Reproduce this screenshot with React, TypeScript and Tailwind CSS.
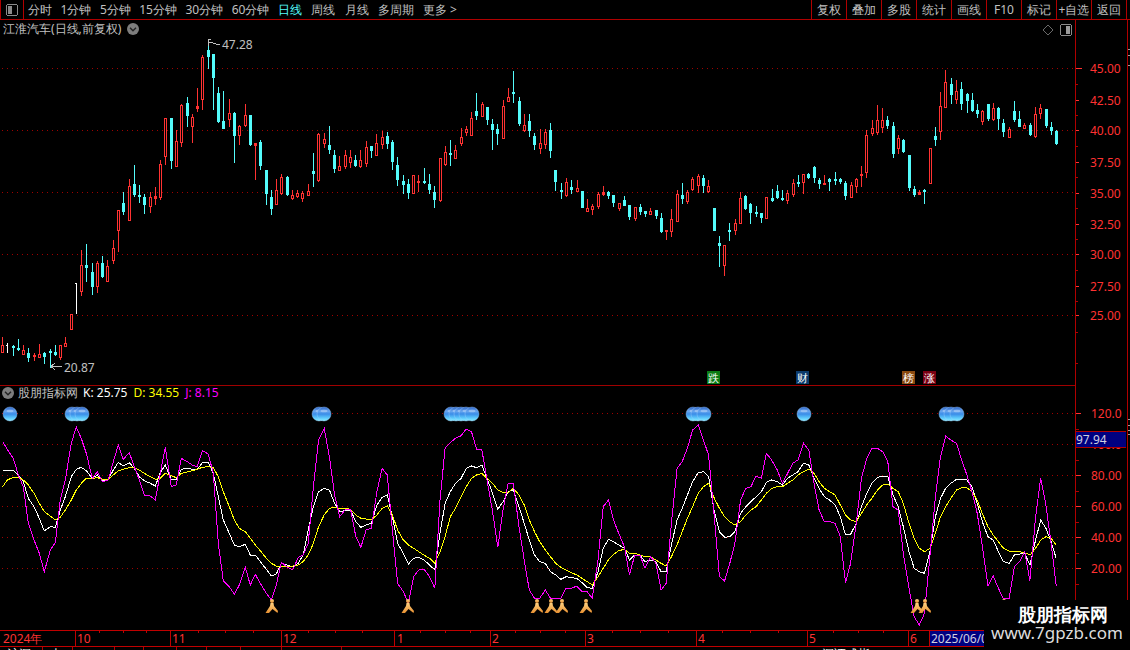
import React from "react";

const RED = "#ff3232";
const CY = "#54fcfc";

// type (0 red, 1 cyan, 2 white), high, bodyTop, bodyBottom, low
const C: number[][] = [
[0,337,345,352,352],[2,343,345,346,352],[1,345,346,347,355],[1,339,348,349,350],[0,345,350,354,354],[1,348,353,357,361],[0,353,355,356,360],[0,344,354,357,357],[1,352,353,356,363],[1,349,351,352,367],
[1,345,352,354,355],[0,345,345,357,359],[0,337,343,346,346],[0,314,314,329,329],[2,283,283,284,313],[0,250,265,291,295],[1,244,265,267,281],[1,263,272,286,294],[0,261,263,286,292],[1,256,263,276,277],
[0,260,266,281,281],[0,240,248,260,263],[0,210,210,230,251],[1,192,203,211,214],[0,179,186,220,220],[1,165,184,194,196],[1,185,195,196,202],[1,194,197,204,213],[0,192,197,206,212],[0,187,196,198,204],
[0,160,164,197,199],[0,118,118,156,164],[1,118,118,160,168],[0,130,141,166,166],[0,104,105,142,146],[1,97,103,115,126],[0,114,117,126,142],[0,88,106,108,111],[0,55,57,99,109],[1,40,50,56,68],
[1,54,54,77,109],[1,87,93,121,122],[1,91,121,128,128],[0,99,113,119,126],[1,112,113,135,162],[0,125,126,135,144],[0,104,115,125,126],[1,115,115,144,145],[0,143,143,145,179],[1,140,142,165,169],
[1,170,170,193,204],[1,190,197,208,214],[0,179,190,204,204],[0,174,177,193,194],[1,176,177,194,195],[0,190,195,198,199],[0,190,193,196,197],[0,191,193,198,201],[0,184,191,195,195],[1,153,171,173,186],
[0,133,134,180,181],[0,133,139,143,147],[1,126,145,149,153],[1,150,155,168,172],[0,156,166,170,170],[0,150,155,166,168],[0,150,157,162,167],[1,155,160,165,166],[0,150,160,166,167],[0,141,147,163,166],
[1,146,146,150,157],[0,134,143,155,155],[0,131,137,144,148],[1,132,136,143,148],[1,140,142,161,169],[1,157,165,179,185],[1,175,181,184,193],[1,179,184,192,198],[0,175,175,193,193],[0,175,181,182,191],
[1,168,181,182,183],[1,174,184,189,193],[1,186,192,199,207],[0,158,158,200,201],[0,146,152,164,165],[1,140,153,154,165],[0,145,150,158,158],[0,128,137,143,145],[0,126,129,132,135],[0,112,118,135,135],
[1,93,111,115,119],[0,102,104,116,116],[1,107,107,119,124],[1,119,124,129,149],[1,124,129,133,144],[0,100,106,138,138],[0,88,97,101,101],[1,71,92,93,102],[1,97,101,123,125],[0,114,125,130,131],
[1,114,121,130,136],[1,133,136,144,149],[0,129,143,148,153],[0,129,132,144,148],[1,123,130,150,157],[1,170,170,181,190],[1,183,190,191,198],[0,178,182,195,196],[1,180,187,189,193],[0,180,188,191,191],
[1,191,191,207,207],[0,199,208,211,211],[0,204,206,209,214],[0,192,194,206,208],[0,186,192,194,195],[1,191,192,195,198],[1,195,195,202,206],[0,203,203,208,210],[1,196,200,205,205],[1,205,205,216,219],
[0,207,207,218,220],[1,204,207,211,214],[1,211,211,213,216],[0,208,211,214,214],[1,210,210,215,218],[1,213,218,231,232],[0,230,230,231,239],[0,209,219,231,236],[0,190,194,221,221],[1,183,195,198,203],
[0,190,192,201,203],[0,177,179,189,190],[0,174,176,185,192],[1,175,178,185,192],[0,180,186,191,192],[1,208,208,230,230],[1,236,243,245,266],[0,245,245,265,275],[1,223,230,231,240],[0,219,223,230,234],
[0,192,198,223,223],[1,195,196,208,209],[1,203,204,212,223],[1,206,212,213,216],[1,213,213,217,222],[0,197,197,218,218],[1,189,198,200,201],[1,185,191,197,198],[1,190,198,199,200],[0,190,193,200,203],
[0,179,183,194,196],[1,175,182,183,186],[0,174,174,182,193],[1,173,174,177,178],[1,166,167,177,182],[1,178,180,183,188],[0,175,183,184,184],[1,178,179,181,190],[1,172,179,180,184],[1,178,179,181,183],
[1,181,183,195,199],[0,182,185,197,197],[0,178,179,186,192],[0,166,174,175,186],[0,130,135,172,177],[0,120,128,133,135],[0,105,120,132,134],[0,108,120,127,132],[1,116,120,125,128],[1,122,126,153,157],
[0,135,138,148,153],[1,139,140,151,152],[1,155,155,187,190],[1,186,189,194,196],[0,190,192,194,194],[1,189,190,191,203],[0,148,148,183,183],[1,127,136,139,145],[0,92,106,131,139],[0,70,82,107,107],
[1,78,84,94,103],[0,80,91,99,103],[1,82,89,103,109],[1,93,94,100,112],[1,93,100,110,111],[1,104,110,113,117],[0,110,111,121,124],[1,104,104,118,120],[0,103,108,119,120],[1,107,108,118,129],
[1,119,123,131,136],[0,127,129,137,137],[1,101,111,119,121],[1,111,119,126,126],[0,123,125,128,128],[1,123,125,134,135],[0,107,114,136,137],[0,104,108,113,118],[1,109,109,125,127],[1,122,127,130,134],[1,130,131,143,144],
];

const J1 = [8,35,22,58,40,85,55,135,70,170,85,280,102,330,118,370,133,425,151,360,166,338,181,210,196,150,214,40,229,-9,244,25,259,70,277,145,292,125,307,155,325,150,340,95,355,45,370,88,388,68,403,110,418,150,433,195,451,198,466,210,481,130,496,52,514,170,529,165,544,85,562,95,577,105,592,110,607,62,625,72,640,130,655,340,670,452,688,470,703,493,718,465,736,412,751,465,766,433,781,460,799,490,814,510,829,465,844,397,860,410,878,420,895,382];
const K1 = [8,123,22,121,40,121,55,135,70,155,85,205,102,230,118,265,133,303,151,290,166,292,181,240,196,200,214,140,229,118,244,112,259,122,277,145,292,135,307,152,325,148,340,120,355,97,370,108,388,98,403,115,418,140,433,152,451,160,466,168,481,128,496,105,514,148,529,148,544,118,562,115,577,118,592,118,607,98,625,97,640,130,655,200,670,270,688,310,703,345,718,350,736,343,751,375,766,375,781,395,799,418,814,438,829,432,844,400,860,405,878,410,895,400];
const D1 = [8,170,22,150,40,142,55,142,70,150,85,165,102,190,118,220,133,245,151,258,166,270,181,262,196,240,214,210,229,180,244,160,259,145,277,145,292,143,307,147,325,147,340,135,355,122,370,118,388,113,403,113,418,120,433,130,451,140,466,148,481,145,496,130,514,137,529,143,544,130,562,126,577,122,592,118,607,112,625,110,640,113,655,140,670,185,688,230,703,270,718,295,736,305,751,325,766,345,781,362,799,385,814,400,829,408,844,410,860,408,878,408,895,405];

const J2 = [64,405,74,370,84,200,94,60,105,25,115,110,125,225,135,290,145,270,156,268,166,350,176,382,186,330,196,325,207,215,217,145,227,165,237,330,247,490,258,515,268,550,278,470,288,450,298,447,309,470,319,505,329,240,339,85,349,68,359,55,370,47,380,27,390,35,400,88,410,88,420,180,431,275,441,382,451,270,461,190,471,190,482,320,492,420,502,510,512,535,522,535,533,510,543,535,553,535,563,535,573,505,584,505,594,498,604,515,614,515,624,535,635,420,645,260,655,240,665,300,675,340,686,380,696,465,706,405,716,405,726,445,737,410,747,430,757,510,767,490,777,310,788,145,798,125,808,85,818,30,829,15,839,60,849,105,860,290,870,470,880,483,890,430,900,370,911,240,921,205,931,200,941,168,951,175,961,100,971,120,982,150,992,190,1002,160,1012,130,1022,120,1033,70,1043,90,1053,190,1063,270,1073,305,1083,305,1094,310,1104,350,1114,488,1124,430,1135,310,1145,175,1155,115,1165,85,1176,85,1186,95,1196,125,1206,260,1216,270,1226,400,1237,505,1247,590,1257,615,1267,580,1278,400,1288,230,1298,110,1308,48,1318,60,1329,70,1339,120,1349,165,1359,215,1369,280,1380,390,1390,497,1400,468,1410,505,1420,537,1431,535,1441,440,1451,425,1461,395,1471,482,1482,290,1492,175,1502,255,1512,370,1522,497];
const K2 = [64,405,74,330,84,260,94,215,105,205,115,210,125,250,135,275,145,272,156,270,166,305,176,322,186,315,196,310,207,255,217,232,227,225,237,290,247,370,258,400,268,432,278,415,288,412,298,420,309,435,319,450,329,340,339,250,349,215,359,190,370,175,380,145,390,138,400,143,410,135,420,175,431,220,441,268,451,245,461,215,471,210,482,260,492,310,502,360,512,405,522,425,533,430,543,455,553,465,563,478,573,470,584,473,594,475,604,488,614,503,624,505,635,455,645,385,655,358,665,365,675,375,686,385,696,420,706,405,716,405,726,425,737,420,747,425,757,455,767,455,777,375,788,300,798,265,808,225,818,185,829,158,839,155,849,170,860,275,870,335,880,352,890,350,900,335,911,280,921,260,931,245,941,230,951,215,961,187,971,180,982,185,992,195,1002,175,1012,165,1022,155,1033,130,1043,135,1053,175,1063,205,1073,230,1083,240,1094,255,1104,290,1114,345,1124,343,1135,310,1145,260,1155,220,1165,190,1176,172,1186,168,1196,170,1206,225,1216,260,1226,320,1237,395,1247,445,1257,455,1267,460,1278,390,1288,290,1298,235,1308,205,1318,190,1329,178,1339,178,1349,180,1359,200,1369,250,1380,310,1390,350,1400,360,1410,395,1420,425,1431,430,1441,405,1451,402,1461,400,1471,435,1482,360,1492,300,1502,325,1512,365,1522,415];
const D2 = [64,425,74,405,84,370,94,320,105,285,115,265,125,262,135,265,145,265,156,268,166,285,176,295,186,297,196,300,207,285,217,265,227,258,237,285,247,330,258,360,268,375,278,385,288,395,298,405,309,415,319,430,329,395,339,350,349,290,359,265,370,230,380,200,390,175,400,165,410,160,420,175,431,190,441,210,451,218,461,218,471,205,482,225,492,255,502,300,512,335,522,365,533,390,543,410,553,430,563,442,573,450,584,458,594,465,604,475,614,485,624,495,635,470,645,445,655,420,665,403,675,392,686,388,696,400,706,400,716,405,726,410,737,410,747,420,757,430,767,438,777,410,788,375,798,335,808,295,818,260,829,220,839,200,849,190,860,235,870,265,880,290,890,305,900,315,911,305,921,285,931,270,941,260,951,240,961,220,971,205,982,200,992,200,1002,190,1012,180,1022,165,1033,155,1043,148,1053,160,1063,185,1073,205,1083,215,1094,225,1104,255,1114,285,1124,300,1135,305,1145,280,1155,255,1165,235,1176,210,1186,195,1196,192,1206,205,1216,215,1226,250,1237,310,1247,355,1257,385,1267,395,1278,385,1288,340,1298,290,1308,260,1318,235,1329,210,1339,203,1349,203,1359,215,1369,240,1380,285,1390,320,1400,345,1410,365,1420,385,1431,393,1441,395,1451,395,1461,398,1471,405,1482,385,1492,360,1502,350,1512,355,1522,375];

const pts = (a: number[], ox: number, sx: number, oy: number) => {
  const out: string[] = [];
  for (let i = 0; i < a.length; i += 2) out.push(`${(ox + a[i] / sx).toFixed(1)},${(oy + a[i + 1] / 3).toFixed(1)}`);
  return out.join(" ");
};
const line = (a: number[], b: number[]) => pts(a, 0, 3, 430) + " " + pts(b, 270, 1.9358, 420);

const BALLS = [10, 72, 77, 82, 319, 324, 451, 456, 461, 466, 472, 693, 698, 704, 804, 946, 951, 957];
const PEOPLE = [272, 408, 537, 551, 562, 586, 917, 925, 1004];
const PRICE = [[45, 68], [42.5, 100], [40, 130], [37.5, 162], [35, 193], [32.5, 224], [30, 254], [27.5, 286], [25, 315]];

function Candles() {
  return (
    <g shapeRendering="crispEdges">
      {C.map((c, i) => {
        const x = Math.floor(2.6 + 5.27 * i);
        const col = c[0] === 0 ? RED : c[0] === 1 ? CY : "#ffffff";
        const bh = c[3] - c[2];
        return (
          <g key={i}>
            <rect x={x} y={c[1]} width={1} height={c[4] - c[1] + 1} fill={col} />
            {c[0] === 2 ? (
              <rect x={x - 1} y={c[2]} width={2} height={1} fill={col} />
            ) : (
              <rect x={x - 1} y={c[2]} width={3} height={bh + 1} fill={col} />
            )}
            {c[0] === 0 && bh >= 3 ? <rect x={x} y={c[2] + 1} width={1} height={bh - 1} fill="#000" /> : null}
          </g>
        );
      })}
    </g>
  );
}

function HalfIcon({ side }: { side: "l" | "r" }) {
  return (
    <svg width="12" height="12" viewBox="0 0 12 12" shapeRendering="crispEdges">
      <rect x="0.5" y="0.5" width="11" height="11" rx="2" fill="#000" stroke="#8a8a8a" />
      {side === "l" ? <rect x="2" y="2" width="4" height="8" fill="#8a8a8a" /> : <rect x="6" y="2" width="4" height="8" fill="#9a9a9a" />}
    </svg>
  );
}

function Chevron() {
  return (
    <svg width="12" height="12" viewBox="0 0 12 12">
      <circle cx="6" cy="6" r="6" fill="#7d7d7d" />
      <path d="M3 4.8 L6 7.8 L9 4.8" fill="none" stroke="#222" strokeWidth="1.4" />
    </svg>
  );
}

const Btn = ({ t }: { t: string }) => (
  <div className="w-[35px] h-full flex items-center justify-center border-l border-[#b00000] text-[#c0c0c0]">{t}</div>
);

const TIME: [string, string][] = [
  ["2024年", "w-[75px] pl-[3px]"],
  ["10", "w-[95px] pl-[1px]"],
  ["11", "w-[111px] pl-[1px]"],
  ["12", "w-[113px] pl-[1px]"],
  ["1", "w-[96px] pl-[2px]"],
  ["2", "w-[95px] pl-[1px]"],
  ["3", "w-[111px] pl-[1px]"],
  ["4", "w-[111px] pl-[1px]"],
  ["5", "w-[101px] pl-[1px]"],
  ["6", "w-[21px] pl-[1px]"],
];

const STATUS = ["w-[43px]", "w-[30px]", "w-[42px]", "w-[29px]", "w-[33px]", "w-[30px]", "w-[34px]", "w-[41px]", "w-[60px]"];

export default function App() {
  return (
    <div className="relative w-[1130px] h-[650px] bg-black overflow-hidden flex flex-col text-[12px] font-['Liberation_Sans','Noto_Sans_CJK_SC',sans-serif]">
      {/* top bar */}
      <header className="h-5 shrink-0 flex items-center border-b border-[#b00000] text-[#c0c0c0] leading-none">
        <div className="w-6 h-full flex items-center justify-center border-l border-r border-[#b00000]">
          <HalfIcon side="l" />
        </div>
        <nav className="flex items-center gap-[8.5px] pl-1 pt-px">
          <span>分时</span>
          <span>1分钟</span>
          <span>5分钟</span>
          <span>15分钟</span>
          <span>30分钟</span>
          <span>60分钟</span>
          <span className="text-[#54fcfc]">日线</span>
          <span className="ml-px">周线</span>
          <span className="ml-px">月线</span>
          <span className="ml-px">多周期</span>
          <span>更多 &gt;</span>
        </nav>
        <div className="ml-auto h-full flex items-center border-r border-[#b00000] mr-[3px]">
          {["复权", "叠加", "多股", "统计", "画线", "F10", "标记", "+自选", "返回"].map((t) => (
            <Btn key={t} t={t} />
          ))}
        </div>
      </header>

      <main className="h-[627px] shrink-0 flex">
        {/* left column */}
        <div className="w-[1076px] shrink-0 flex flex-col border-r border-[#b00000]">
          {/* price panel */}
          <section className="relative h-[366px] shrink-0 border-b border-[#a00000]">
            <svg width="1075" height="365" viewBox="0 20 1075 365" className="block">
              {[68, 130, 192, 254, 315].map((y) => (
                <line key={y} x1="2" x2="1075" y1={y + 0.5} y2={y + 0.5} stroke="#a00000" strokeDasharray="1 4" shapeRendering="crispEdges" />
              ))}
              <Candles />
              <path d="M208.5 39V46M208.5 39.5H211M208.5 42.5L212 42.5L216 44L220 44" fill="none" stroke="#c0c0c0" shapeRendering="crispEdges" />
              <text x="222" y="49" fontSize="12" fill="#c0c0c0">47.28</text>
              <path d="M51 366.5H62M51 366.5L55 363M51 366.5L55 370" fill="none" stroke="#c0c0c0" shapeRendering="crispEdges" />
              <text x="64" y="372" fontSize="12" fill="#c0c0c0">20.87</text>
            </svg>
            <div className="absolute left-[3px] top-[3px] flex items-center gap-[6px] text-[#c0c0c0] leading-none">
              <span>江淮汽车(日线,前复权)</span>
              <Chevron />
            </div>
            <div className="absolute right-[3px] top-[4px] flex items-center gap-[7px]">
              <svg width="10" height="10" viewBox="0 0 10 10"><path d="M5 0L10 5L5 10L0 5Z" fill="none" stroke="#6a6a6a" /></svg>
              <HalfIcon side="r" />
            </div>
            <div className="absolute left-[707px] top-[351px] w-[13px] h-[13px] bg-[#0a7a14] text-white text-[11px] leading-[13px] text-center">跌</div>
            <div className="absolute left-[796px] top-[351px] w-[13px] h-[13px] bg-[#0b3a6b] text-white text-[11px] leading-[13px] text-center">财</div>
            <div className="absolute left-[902px] top-[351px] w-[13px] h-[13px] bg-[#8a4a10] text-white text-[11px] leading-[13px] text-center">榜</div>
            <div className="absolute left-[923px] top-[351px] w-[13px] h-[13px] bg-[#7a0012] text-white text-[11px] leading-[13px] text-center">涨</div>
          </section>

          {/* indicator panel */}
          <section className="relative h-[244px] shrink-0">
            <svg width="1075" height="244" viewBox="0 386 1075 244" className="block">
              <defs>
                <linearGradient id="ball" x1="0" y1="0" x2="0" y2="1">
                  <stop offset="0" stopColor="#2a62c8" />
                  <stop offset="0.3" stopColor="#6aa6ee" />
                  <stop offset="0.5" stopColor="#3a8ce8" />
                  <stop offset="0.78" stopColor="#5cc8fb" />
                  <stop offset="1" stopColor="#8eeeff" />
                </linearGradient>
                <linearGradient id="man" x1="0" y1="0" x2="0" y2="1">
                  <stop offset="0" stopColor="#ffd080" />
                  <stop offset="1" stopColor="#e89030" />
                </linearGradient>
              </defs>
              {[414, 445, 476, 507, 538, 569].map((y) => (
                <line key={y} x1="2" x2="1075" y1={y - 0.5} y2={y - 0.5} stroke="#a00000" strokeDasharray="1 4" shapeRendering="crispEdges" />
              ))}
              <polyline points={line(K1, K2)} fill="none" stroke="#ffffff" shapeRendering="crispEdges" />
              <polyline points={line(D1, D2)} fill="none" stroke="#ffff00" shapeRendering="crispEdges" />
              <polyline points={line(J1, J2)} fill="none" stroke="#ff00ff" shapeRendering="crispEdges" />
              {BALLS.map((x, i) => (
                <g key={i}>
                  <circle cx={x} cy={414} r={7} fill="url(#ball)" stroke="#9fd0ff" strokeWidth="0.4" />
                  <ellipse cx={x} cy={411} rx={3.5} ry={1.3} fill="#dcecff" opacity="0.4" />
                </g>
              ))}
              {PEOPLE.map((x) => (
                <g key={x} fill="url(#man)">
                  <circle cx={x} cy={601} r={2} />
                  <path d={`M${x - 1.5} 603L${x + 1.5} 603L${x + 2} 606L${x + 6} 611L${x + 5.5} 613L${x + 0.5} 609L${x - 3} 613L${x - 6.5} 613L${x - 2} 606Z`} />
                </g>
              ))}
            </svg>
            <div className="absolute left-[2px] top-[1px] flex items-center leading-none">
              <Chevron />
              <span className="ml-[4px] text-[#c0c0c0]">股朋指标网</span>
              <span className="ml-[5px] text-white">K: 25.75</span>
              <span className="ml-[6px] text-[#ffff00]">D: 34.55</span>
              <span className="ml-[6px] text-[#ff00ff]">J: 8.15</span>
            </div>
          </section>

          {/* time axis */}
          <div className="relative h-[17px] shrink-0 flex border-y border-[#c00000] text-[#ff3232] leading-[15px]">
            {TIME.map(([t, w], i) => (
              <div key={t} className={`${w} shrink-0 ${i ? "border-l border-[#c00000]" : ""}`}>{t}</div>
            ))}
            <div className="w-[55px] shrink-0 bg-[#000080] text-[#d0d0e0] pl-[1px] overflow-hidden whitespace-nowrap border-l border-[#c00000]">2025/06/0</div>
            <svg width="928" height="3" className="absolute left-0 top-0" shapeRendering="crispEdges">
              {[99, 123, 146, 198, 225, 253, 308, 335, 362, 420, 445, 470, 515, 540, 565, 612, 640, 668, 722, 750, 778, 833, 858, 883].map((x) => (
                <rect key={x} x={x} y="0" width="1" height="2" fill="#c00000" />
              ))}
            </svg>
          </div>
        </div>

        {/* right axis column */}
        <div className="w-[51px] shrink-0 flex flex-col border-r border-[#b00000] box-content">
          <svg width="51" height="366" viewBox="1076 20 51 366" className="block shrink-0">
            {PRICE.map(([v, y], i) => (
              <g key={v}>
                <rect x="1076" y={y} width={i === 0 ? 6 : 3} height="1" fill={RED} shapeRendering="crispEdges" />
                <text x="1090" y={y + 5} fontSize="12" fill={RED}>{v.toFixed(2)}</text>
              </g>
            ))}
            {[84, 115, 146, 177, 208, 239, 270, 301, 332, 363].map((y) => (
              <rect key={y} x="1076" y={y} width="2" height="1" fill="#b00000" shapeRendering="crispEdges" />
            ))}
          </svg>
          <div className="relative h-[244px] shrink-0">
            <svg width="51" height="244" viewBox="1076 386 51 244" className="block">
              {[[120, 413], [100, 444], [80, 475], [60, 506], [40, 537], [20, 568]].map(([v, y]) => (
                <g key={v}>
                  <rect x="1076" y={y} width="5" height="1" fill={RED} shapeRendering="crispEdges" />
                  <text x="1091" y={y + 5} fontSize="12" fill={RED}>{v === 120 ? "120.0" : v === 100 ? "100.0" : `${v}.00`}</text>
                </g>
              ))}
              {[429, 460, 491, 522, 553, 584].map((y) => (
                <rect key={y} x="1076" y={y} width="3" height="1" fill="#b00000" shapeRendering="crispEdges" />
              ))}
            </svg>
            <div className="absolute left-0 top-[45px] w-[50px] h-[17px] bg-[#000080] border-y border-[#b00000] text-[#d0d0e0] leading-[15px]">97.94</div>
          </div>
        </div>
        <svg width="2" height="627" className="block shrink-0" shapeRendering="crispEdges">
          {[29, 35, 45, 399, 405, 410, 414].map((y) => (
            <rect key={y} x="0" y={y} width="2" height="1" fill="#a0a0a0" />
          ))}
        </svg>
      </main>

      {/* status row, cut by the window edge */}
      <footer className="flex-1 flex text-white leading-[14px] overflow-hidden">
        {STATUS.map((w, i) => (
          <div key={i} className={`${w} shrink-0 border-r border-[#b00000] pl-[7px] overflow-hidden whitespace-nowrap`}>{i === 0 ? "沪深" : i === 1 ? "上" : ""}</div>
        ))}
        <div className="ml-[480px] whitespace-nowrap">深证成指</div>
      </footer>

      {/* watermark */}
      <div className="absolute left-[984px] top-[600px] w-[146px] h-[50px] bg-black flex flex-col items-center pt-[4px]">
        <div className="ml-[11px] text-[18px] leading-[20px] font-bold text-white">股朋指标网</div>
        <div className="text-[17px] leading-[18px] text-[#dcdcdc] font-['DejaVu_Sans',sans-serif]">www.7gpzb.com</div>
      </div>
    </div>
  );
}
